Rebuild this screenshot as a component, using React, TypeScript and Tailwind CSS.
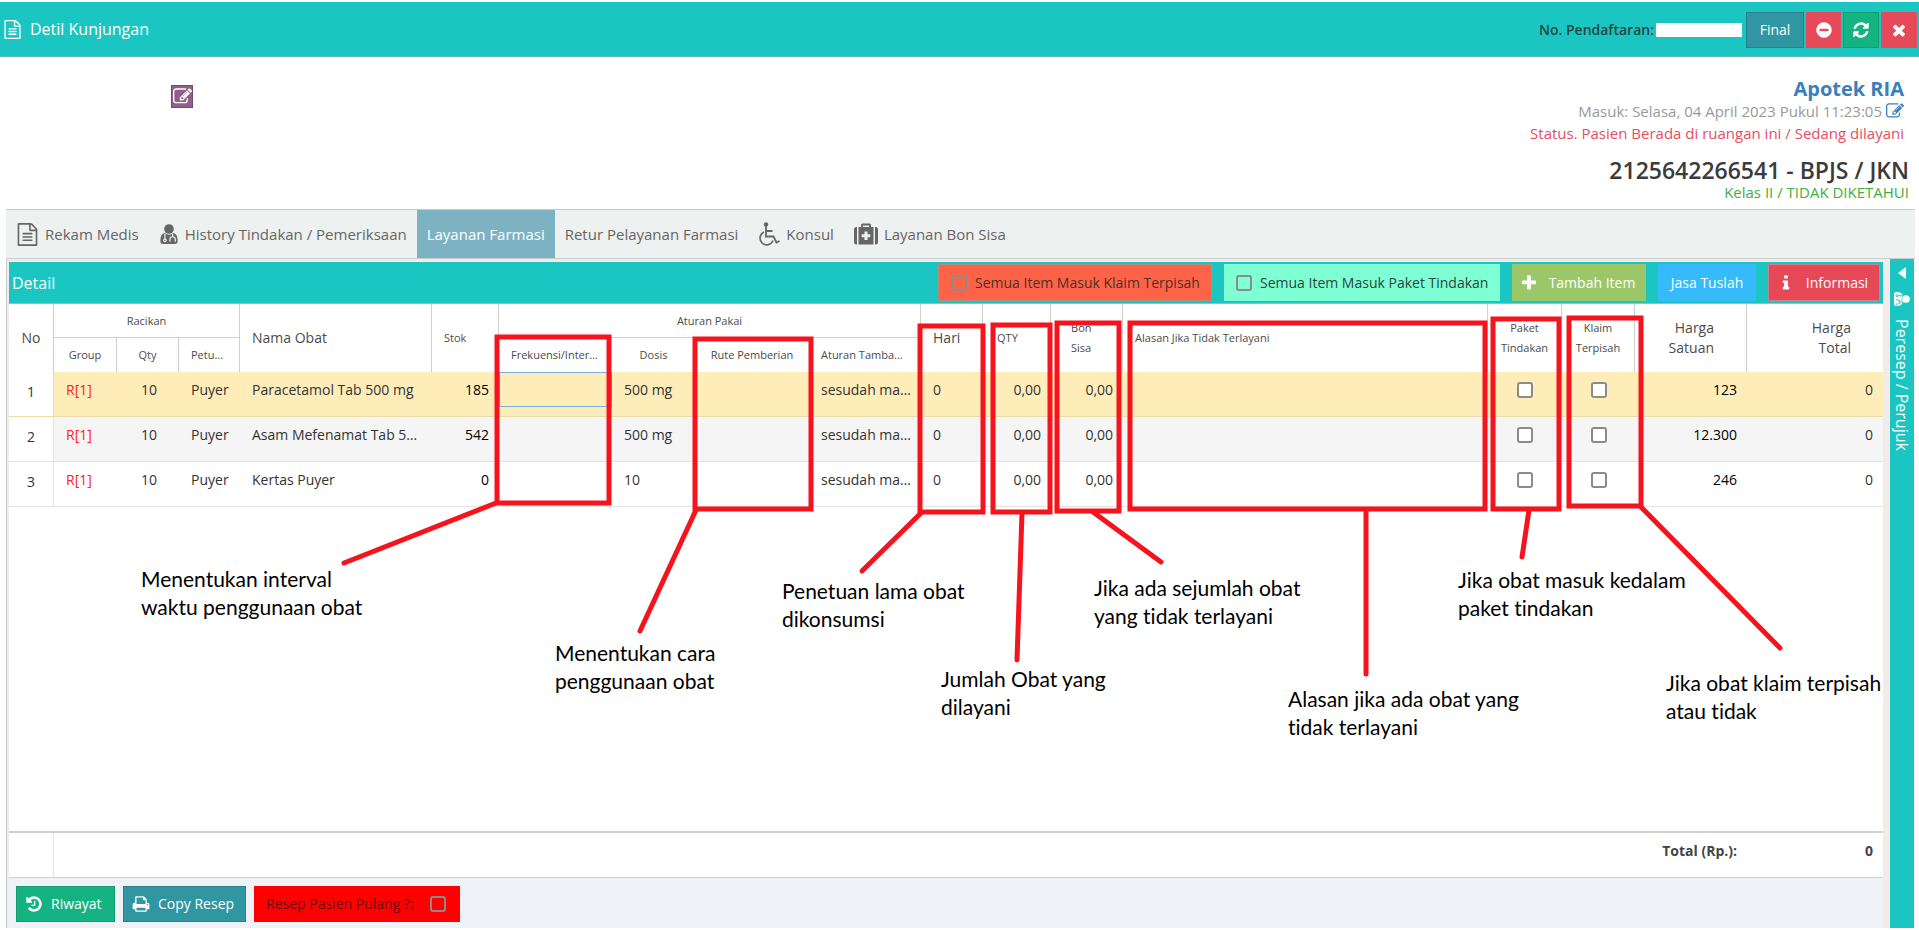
import type { ReactNode } from "react";

const ICONS = {
  file: "M1596 380q28 28 48 76t20 88v1152q0 40-28 68t-68 28h-1344q-40 0-68-28t-28-68v-1600q0-40 28-68t68-28h896q40 0 88 20t76 48zm-444-244v376h376q-10-29-22-41l-313-313q-12-12-41-22zm384 1528v-1024h-416q-40 0-68-28t-28-68v-416h-768v1536h1280zm-1024-864q0-14 9-23t23-9h704q14 0 23 9t9 23v64q0 14-9 23t-23 9h-704q-14 0-23-9t-9-23v-64zm736 224q14 0 23 9t9 23v64q0 14-9 23t-23 9h-704q-14 0-23-9t-9-23v-64q0-14 9-23t23-9h704zm0 256q14 0 23 9t9 23v64q0 14-9 23t-23 9h-704q-14 0-23-9t-9-23v-64q0-14 9-23t23-9h704z",
  edit: "M888 1184l116-116-152-152-116 116v56h96v96h56zm440-720q-16-16-33 1l-350 350q-17 17-1 33t33-1l350-350q17-17 1-33zm80 594v190q0 119-84.5 203.5t-203.5 84.5h-832q-119 0-203.5-84.5t-84.5-203.5v-832q0-119 84.5-203.5t203.5-84.5h832q63 0 117 25 15 7 18 23 3 17-9 29l-49 49q-14 14-32 8-23-6-45-6h-832q-66 0-113 47t-47 113v832q0 66 47 113t113 47h832q66 0 113-47t47-113v-126q0-13 9-22l64-64q15-15 35-7t20 29zm-96-738l288 288-672 672h-288v-288zm444 132l-92 92-288-288 92-92q28-28 68-28t68 28l152 152q28 28 28 68t-28 68z",
  refresh: "M1639 1056q0 5-1 7-64 268-268 434.5t-478 166.5q-146 0-282.5-55t-243.5-157l-129 129q-19 19-45 19t-45-19-19-45v-448q0-26 19-45t45-19h448q26 0 45 19t19 45-19 45l-137 137q71 66 161 102t187 36q134 0 250-65t186-179q11-17 53-117 8-23 30-23h192q13 0 22.5 9.5t9.5 22.5zm25-800v448q0 26-19 45t-45 19h-448q-26 0-45-19t-19-45 19-45l138-138q-148-137-349-137-134 0-250 65t-186 179q-11 17-53 117-8 23-30 23h-199q-13 0-22.5-9.5t-9.5-22.5v-7q65-268 270-434.5t480-166.5q146 0 284 55.5t245 156.5l130-129q19-19 45-19t45 19 19 45z",
  times: "M1490 1322q0 40-28 68l-136 136q-28 28-68 28t-68-28l-294-294-294 294q-28 28-68 28t-68-28l-136-136q-28-28-28-68t28-68l294-294-294-294q-28-28-28-68t28-68l136-136q28-28 68-28t68 28l294 294 294-294q28-28 68-28t68 28l136 136q28 28 28 68t-28 68l-294 294 294 294q28 28 28 68z",
  minus: "M1344 960v-128q0-26-19-45t-45-19h-768q-26 0-45 19t-19 45v128q0 26 19 45t45 19h768q26 0 45-19t19-45zm320-64q0 209-103 385.5t-279.5 279.5-385.5 103-385.5-103-279.5-279.5-103-385.5 103-385.5 279.5-279.5 385.5-103 385.5 103 279.5 279.5 103 385.5z",
  plus: "M1600 736v192q0 40-28 68t-68 28h-416v416q0 40-28 68t-68 28h-192q-40 0-68-28t-28-68v-416h-416q-40 0-68-28t-28-68v-192q0-40 28-68t68-28h416v-416q0-40 28-68t68-28h192q40 0 68 28t28 68v416h416q40 0 68 28t28 68z",
  info: "M1216 1344v128q0 26-19 45t-45 19h-512q-26 0-45-19t-19-45v-128q0-26 19-45t45-19h64v-384h-64q-26 0-45-19t-19-45v-128q0-26 19-45t45-19h384q26 0 45 19t19 45v576h64q26 0 45 19t19 45zm-128-1152v192q0 26-19 45t-45 19h-256q-26 0-45-19t-19-45v-192q0-26 19-45t45-19h256q26 0 45 19t19 45z",
  history: "M1664 896q0 156-61 298t-164 245-245 164-298 61q-172 0-327-72.5t-264-204.5q-7-10-6.5-22.5t8.5-20.5l137-138q10-9 25-9 16 2 23 12 73 95 179 147t225 52q104 0 198.5-40.5t163.5-109.5 109.5-163.5 40.5-198.5-40.5-198.5-109.5-163.5-163.5-109.5-198.5-40.5q-98 0-188 35.5t-160 101.5l137 138q31 30 14 69-17 40-59 40h-448q-26 0-45-19t-19-45v-448q0-42 40-59 39-17 69 14l130 129q107-101 244.5-156.5t284.5-55.5q156 0 298 61t245 164 164 245 61 298zm-640-288v448q0 14-9 23t-23 9h-320q-14 0-23-9t-9-23v-64q0-14 9-23t23-9h224v-352q0-14 9-23t23-9h64q14 0 23 9t9 23z",
  print: "M448 1536h896v-256h-896v256zm0-640h896v-384h-160q-40 0-68-28t-28-68v-160h-640v640zm1152 64q0-26-19-45t-45-19-45 19-19 45 19 45 45 19 45-19 19-45zm128 0v416q0 13-9.5 22.5t-22.5 9.5h-224v160q0 40-28 68t-68 28h-960q-40 0-68-28t-28-68v-160h-224q-13 0-22.5-9.5t-9.5-22.5v-416q0-79 56.5-135.5t135.5-56.5h64v-544q0-40 28-68t68-28h672q40 0 88 20t76 48l152 152q28 28 48 76t20 88v256h64q79 0 135.5 56.5t56.5 135.5z",
};

function Icon({ name, className }: { name: keyof typeof ICONS; className: string }) {
  return (
    <svg viewBox="0 0 1792 1792" fill="currentColor" className={`shrink-0 ${className}`} aria-hidden="true">
      <path d={ICONS[name]} />
    </svg>
  );
}

function DoctorIcon({ className, gap }: { className: string; gap: string }) {
  return (
    <svg viewBox="0 0 20 22" className={`shrink-0 ${className}`} aria-hidden="true">
      <circle cx="10" cy="5.5" r="5.3" fill="currentColor" />
      <path d="M5.5 10q4.5 3.5 9 0q5 1 5 8v1q0 3-3 3h-13q-3 0-3-3v-1q0-7 5-8z" fill="currentColor" />
      <g fill="none" stroke={gap} strokeWidth="1.3">
        <path d="M5.5 10.5v6" />
        <circle cx="5.5" cy="18" r="1.4" />
        <path d="M14 10.5v3.5M11 19.5v-2.5q0-3 3-3t3 3v2.5" />
      </g>
    </svg>
  );
}

function WheelchairIcon() {
  return (
    <svg viewBox="0 0 22 24" className="h-6 w-[22px] shrink-0" fill="none" stroke="currentColor" aria-hidden="true">
      <circle cx="8" cy="2.5" r="2.2" fill="currentColor" stroke="none" />
      <path d="M8 4v10.5h7.5l3 6 3-1.5M8 9h6.5" strokeWidth="1.8" />
      <path d="M6 10a6.7 6.7 0 1 0 9 8.5" strokeWidth="1.6" />
    </svg>
  );
}

function MedkitIcon() {
  return (
    <svg viewBox="0 0 24 22" className="h-[22px] w-6 shrink-0" fill="currentColor" aria-hidden="true">
      <path d="M3 4v17.5h-.5q-2.5 0-2.5-2.5v-12.5q0-2.5 2.5-2.5zM21 4v17.5h.5q2.5 0 2.5-2.5v-12.5q0-2.5-2.5-2.5z" />
      <path d="M7 4v-2q0-1.5 1.5-1.5h7q1.5 0 1.5 1.5v2h2.5v17.5h-15v-17.5zm2 0h6v-1.5h-6zm1.5 4.5v2.8h-2.8v3h2.8v2.8h3v-2.8h2.8v-3h-2.8v-2.8z" fillRule="evenodd" />
    </svg>
  );
}

const tabs: { label: string; icon?: ReactNode; active?: boolean }[] = [
  { label: "Rekam Medis", icon: <Icon name="file" className="h-[23px] w-[23px]" /> },
  { label: "History Tindakan / Pemeriksaan", icon: <DoctorIcon className="h-5 w-5" gap="#edf1f0" /> },
  { label: "Layanan Farmasi", active: true },
  { label: "Retur Pelayanan Farmasi" },
  { label: "Konsul", icon: <WheelchairIcon /> },
  { label: "Layanan Bon Sisa", icon: <MedkitIcon /> },
];

const rows = [
  { nama: "Paracetamol Tab 500 mg", stok: "185", dosis: "500 mg", harga: "123" },
  { nama: "Asam Mefenamat Tab 500 mg", stok: "542", dosis: "500 mg", harga: "12.300" },
  { nama: "Kertas Puyer", stok: "0", dosis: "10", harga: "246" },
];

const rowStyles = [
  "bg-[#feedb9] border-[#eddca8]",
  "bg-[#f5f5f5] border-[#e4e4e4]",
  "bg-white border-[#e4e4e4]",
];

// Highlight frames: x, y, width, height
const frames = [
  [497, 337, 112, 166],
  [695, 339, 116, 170],
  [920, 326, 63, 186],
  [993, 325, 57, 187],
  [1057, 323, 62, 188],
  [1130, 323, 355, 186],
  [1493, 319, 66, 190],
  [1569, 318, 72, 188],
];

const pointers = [
  "M496 503L344 563",
  "M696 510L640 631",
  "M921 513L862 571",
  "M1022 513L1017 660",
  "M1093 512L1161 562",
  "M1366 510V674",
  "M1529 510L1522 557",
  "M1641 507L1780 648",
];

const notes = [
  { pos: "left-[141px] top-[565px]", lines: ["Menentukan interval", "waktu penggunaan obat"] },
  { pos: "left-[555px] top-[639px]", lines: ["Menentukan cara", "penggunaan obat"] },
  { pos: "left-[782px] top-[577px]", lines: ["Penetuan lama obat", "dikonsumsi"] },
  { pos: "left-[941px] top-[665px]", lines: ["Jumlah Obat yang", "dilayani"] },
  { pos: "left-[1094px] top-[574px]", lines: ["Jika ada sejumlah obat", "yang tidak terlayani"] },
  { pos: "left-[1288px] top-[685px]", lines: ["Alasan jika ada obat yang", "tidak terlayani"] },
  { pos: "left-[1458px] top-[566px]", lines: ["Jika obat masuk kedalam", "paket tindakan"] },
  { pos: "left-[1666px] top-[669px]", lines: ["Jika obat klaim terpisah", "atau tidak"] },
];

const box = "block h-4 w-4 shrink-0 appearance-none rounded-[3px] border-2 border-[#8b8b8b]";
const th = "border-r border-[#cfcfcf] font-normal text-[#4b4b4b]";
const td = "truncate pl-3 pr-[10px] pt-2 align-top";

function Header() {
  return (
    <header className="mt-[2px] flex h-[55px] items-center justify-between border-b border-[#5fb8b4] bg-[#1bc6c2] pl-[3px] pr-[2px]">
      <h1 className="flex items-center gap-2 text-base text-white">
        <Icon name="file" className="h-[19px] w-[19px]" />
        Detil Kunjungan
      </h1>
      <div className="flex items-center gap-[2px] pt-[2px] text-white">
        <span className="text-sm font-semibold text-[#234645]">No. Pendaftaran:</span>
        <span className="mr-[2px] h-[14px] w-[86px] bg-white" />
        <button className="h-9 w-[58px] border border-[#27808b] bg-[#3096a2] text-sm">Final</button>
        <button aria-label="Batal" className="flex h-9 w-[35px] items-center justify-center bg-[#e64a5a]">
          <Icon name="minus" className="h-[18px] w-[18px]" />
        </button>
        <button aria-label="Muat ulang" className="flex h-9 w-9 items-center justify-center border border-[#119e6e] bg-[#15b381]">
          <Icon name="refresh" className="h-[18px] w-[18px]" />
        </button>
        <button aria-label="Tutup" className="flex h-9 w-9 items-center justify-center bg-[#e64a5a]">
          <Icon name="times" className="h-[18px] w-[18px]" />
        </button>
      </div>
    </header>
  );
}

function Patient() {
  return (
    <section className="flex h-[152px] justify-between pl-[171px] pr-[10px]">
      <button aria-label="Ubah pasien" className="mt-7 flex h-[23px] w-[22px] items-center justify-center border border-[#75486f] bg-[#915f8b] text-white">
        <Icon name="edit" className="h-[19px] w-[19px]" />
      </button>
      <div className="flex flex-col items-end pt-5">
        <div className="flex flex-col items-end pr-[5px] text-[15px] leading-[22px]">
          <strong className="text-xl leading-[23px] font-bold text-[#3a7fbb]">Apotek RIA</strong>
          <p className="flex items-center gap-1 text-[#999]">
            Masuk: Selasa, 04 April 2023 Pukul 11:23:05
            <a href="#masuk" aria-label="Ubah tanggal masuk" className="text-[#3a7fbb]">
              <Icon name="edit" className="h-[18px] w-[18px]" />
            </a>
          </p>
          <p className="font-medium text-[#e34f63]">Status. Pasien Berada di ruangan ini / Sedang dilayani</p>
        </div>
        <strong className="mt-3 text-[23px] leading-7 font-semibold text-[#3b3b3b]">2125642266541 - BPJS / JKN</strong>
        <p className="text-[15px] leading-4 font-medium text-[#3fae3f]">Kelas II / TIDAK DIKETAHUI</p>
      </div>
    </section>
  );
}

function Tabs() {
  return (
    <nav className="ml-[6px] mr-1 flex h-[50px] border-y border-[#c9cccc] bg-[#edf1f0] text-[15px] text-[#666]">
      {tabs.map((t) => (
        <a
          key={t.label}
          href="#tab"
          className={`flex items-center gap-[6px] px-[10px] ${t.active ? "bg-[#7db2c2] text-white" : ""}`}
        >
          {t.icon}
          {t.label}
        </a>
      ))}
    </nav>
  );
}

function Toolbar() {
  return (
    <div className="flex h-[42px] items-center border-b border-[#7fc9c6] bg-[#1bc6c2] px-[3px] text-sm whitespace-nowrap">
      <h2 className="mr-auto text-base font-medium text-white">Detail</h2>
      <div className="flex items-center gap-3">
        <label className="flex h-[37px] w-[274px] items-center gap-2 border border-[#b0907f] bg-[#ff6347] px-3 text-[#4b2f28]">
          <input type="checkbox" className={box} />
          Semua Item Masuk Klaim Terpisah
        </label>
        <label className="flex h-[37px] w-[276px] items-center gap-2 bg-[#7fffd4] px-3 text-[#28463c]">
          <input type="checkbox" className={box} />
          Semua Item Masuk Paket Tindakan
        </label>
        <button className="flex h-[37px] w-[134px] items-center gap-2 bg-[#9bc768] px-2 text-white">
          <Icon name="plus" className="h-[18px] w-[18px]" />
          <span className="grow">Tambah Item</span>
        </button>
        <button className="h-[37px] w-[98px] bg-[#35bbfa] text-white">Jasa Tuslah</button>
        <button className="flex h-[37px] w-[112px] items-center gap-2 border border-[#c9838b] bg-[#e64858] px-2 text-white">
          <Icon name="info" className="h-[18px] w-[18px]" />
          <span className="grow">Informasi</span>
        </button>
      </div>
    </div>
  );
}

function Grid() {
  return (
    <table className="w-full table-fixed border-separate border-spacing-0 text-sm text-[#333]">
      <colgroup>
        <col className="w-[45px]" />
        <col className="w-[63px]" />
        <col className="w-[62px]" />
        <col className="w-[61px]" />
        <col className="w-[192px]" />
        <col className="w-[67px]" />
        <col className="w-[113px]" />
        <col className="w-[83px]" />
        <col className="w-[114px]" />
        <col className="w-[112px]" />
        <col className="w-[62px]" />
        <col className="w-[68px]" />
        <col className="w-[72px]" />
        <col />
        <col className="w-[74px]" />
        <col className="w-[73px]" />
        <col className="w-[112px]" />
        <col className="w-[136px]" />
      </colgroup>
      <thead className="text-[11px]">
        <tr className="h-[34px]">
          <th rowSpan={2} className={`${th} text-sm`}>No</th>
          <th colSpan={3} className={`${th} border-b`}>Racikan</th>
          <th rowSpan={2} className={`${th} px-3 text-left text-sm`}>Nama Obat</th>
          <th rowSpan={2} className={`${th} px-3 text-left`}>Stok</th>
          <th colSpan={4} className={`${th} border-b`}>Aturan Pakai</th>
          <th rowSpan={2} className={`${th} px-3 text-left text-sm`}>Hari</th>
          <th rowSpan={2} className={`${th} px-[14px] text-left`}>QTY</th>
          <th rowSpan={2} className={`${th} pl-5 text-left leading-5`}>Bon<br />Sisa</th>
          <th rowSpan={2} className={`${th} px-3 text-left`}>Alasan Jika Tidak Terlayani</th>
          <th rowSpan={2} className={`${th} leading-5`}>Paket<br />Tindakan</th>
          <th rowSpan={2} className={`${th} leading-5`}>Klaim<br />Terpisah</th>
          <th rowSpan={2} className={`${th} pr-8 text-right text-sm`}>Harga<br />Satuan</th>
          <th rowSpan={2} className="pr-8 text-right text-sm font-normal text-[#4b4b4b]">Harga<br />Total</th>
        </tr>
        <tr className="h-[34px]">
          <th className={th}>Group</th>
          <th className={th}>Qty</th>
          <th className={`${th} truncate px-3 text-left`}>Petugas</th>
          <th className="truncate px-3 text-left font-normal text-[#4b4b4b]">Frekuensi/Interval</th>
          <th className="font-normal text-[#4b4b4b]">Dosis</th>
          <th className="font-normal text-[#4b4b4b]">Rute Pemberian</th>
          <th className={`${th} truncate px-3 text-left`}>Aturan Tambahan</th>
        </tr>
      </thead>
      <tbody>
        {rows.map((r, i) => (
          <tr key={r.nama} className={`h-[45px] [&>td]:border-b [&>td]:border-inherit ${rowStyles[i]}`}>
            <td className="border-r bg-white pt-[10px] text-center align-top">{i + 1}</td>
            <td className={`${td} text-[#f22]`}>R[1]</td>
            <td className={`${td} text-center`}>10</td>
            <td className={td}>Puyer</td>
            <td className={td}>{r.nama}</td>
            <td className={`${td} text-right text-black`}>{r.stok}</td>
            <td className="align-top">
              <input
                aria-label={`Frekuensi ${r.nama}`}
                className={`block h-[35px] w-full px-2 outline-none ${i === 0 ? "border border-[#77aee0]" : ""}`}
              />
            </td>
            <td className={td}>{r.dosis}</td>
            <td />
            <td className="truncate pt-2 pr-1 pl-3 align-top">sesudah makan</td>
            <td className={td}>0</td>
            <td className={`${td} text-right`}>0,00</td>
            <td className={`${td} text-right`}>0,00</td>
            <td />
            <td className="pt-[10px] align-top">
              <input type="checkbox" aria-label={`Paket tindakan ${r.nama}`} className={`${box} mx-auto bg-white`} />
            </td>
            <td className="pt-[10px] align-top">
              <input type="checkbox" aria-label={`Klaim terpisah ${r.nama}`} className={`${box} mx-auto bg-white`} />
            </td>
            <td className={`${td} text-right text-black`}>{r.harga}</td>
            <td className={`${td} text-right`}>0</td>
          </tr>
        ))}
      </tbody>
    </table>
  );
}

function BottomBar() {
  return (
    <footer className="flex h-[50px] items-center gap-2 bg-[#eff3f7] px-[7px] pt-[2px] text-sm text-white">
      <button className="flex h-9 w-[99px] items-center gap-2 border border-[#119e6e] bg-[#15b381] px-2">
        <Icon name="history" className="h-[18px] w-[18px]" />
        Riwayat
      </button>
      <button className="flex h-9 w-[123px] items-center gap-2 border border-[#27808b] bg-[#3096a2] px-2 whitespace-nowrap">
        <Icon name="print" className="h-[18px] w-[18px]" />
        Copy Resep
      </button>
      <label className="flex h-9 w-[206px] items-center gap-4 bg-[#f00] px-3 whitespace-nowrap text-[#6b1010]">
        Resep Pasien Pulang ?:
        <input type="checkbox" className={box} />
      </label>
    </footer>
  );
}

function Annotations() {
  return (
    <div className="pointer-events-none absolute inset-0 overflow-hidden">
      <svg className="absolute left-0 top-0 h-[930px] w-[1919px]" fill="none" stroke="#f5141e" strokeWidth="5" aria-hidden="true">
        {frames.map(([x, y, w, h]) => (
          <rect key={x} x={x} y={y} width={w} height={h} />
        ))}
        {pointers.map((d) => (
          <path key={d} d={d} strokeLinecap="round" />
        ))}
      </svg>
      {notes.map((n) => (
        <p
          key={n.pos}
          className={`absolute font-['Lato',sans-serif] text-[21px] leading-7 whitespace-nowrap text-black [font-variant-ligatures:none] ${n.pos}`}
        >
          {n.lines[0]}
          <br />
          {n.lines[1]}
        </p>
      ))}
    </div>
  );
}

export default function App() {
  return (
    <div className="relative flex min-h-screen flex-col bg-white pb-[2px] font-['Open_Sans',sans-serif]">
      <Header />
      <Patient />
      <Tabs />
      <div className="ml-[6px] mr-[5px] flex grow border-l border-[#c9cccc]">
        <main className="flex grow flex-col bg-[#f1ebea] pl-[2px] pr-[7px] pt-[3px]">
          <Toolbar />
          <div className="grow bg-white">
            <Grid />
          </div>
          <div className="flex h-[47px] border-t-2 border-b border-[#cfcfcf] bg-white text-sm font-bold text-[#444]">
            <div className="w-[45px] border-r border-[#e4e4e4]" />
            <div className="flex grow justify-end pt-2 pr-[10px]">
              <span>Total (Rp.):</span>
              <span className="w-[136px] text-right">0</span>
            </div>
          </div>
          <BottomBar />
        </main>
        <aside className="w-[25px] bg-[#1bc6c2] text-white">
          <button className="flex w-full flex-col items-center gap-3 pt-2">
            <svg viewBox="0 0 8 12" className="h-3 w-2" fill="currentColor" aria-hidden="true">
              <path d="M8 0v12l-8-6z" />
            </svg>
            <span className="flex items-center gap-3 text-base font-medium [writing-mode:vertical-rl]">
              <DoctorIcon className="h-4 w-4 rotate-90" gap="#1bc6c2" />
              Peresep / Perujuk
            </span>
          </button>
        </aside>
      </div>
      <Annotations />
    </div>
  );
}
